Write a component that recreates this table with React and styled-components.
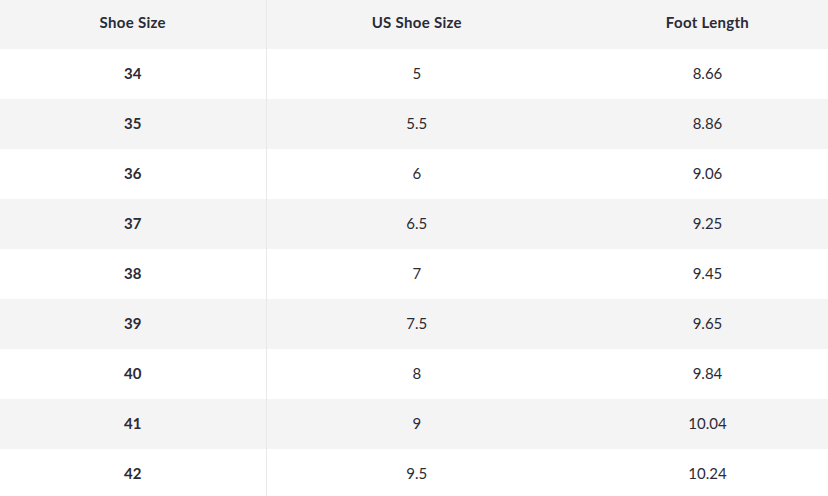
import React from 'react';
import styled, { createGlobalStyle } from 'styled-components';

const GlobalStyle = createGlobalStyle`
  html, body {
    margin: 0;
    padding: 0;
    background: #fff;
  }
  body {
    width: 828px;
    height: 496px;
    overflow: hidden;
  }
`;

const Wrapper = styled.div`
  width: 828px;
  height: 496px;
  overflow: hidden;
  font-family: Lato, 'Liberation Sans', sans-serif;
  color: #2b2b35;
`;

const Table = styled.table`
  width: 848px;
  border-collapse: collapse;
  table-layout: fixed;
`;

const Row = styled.tr`
  height: ${(p) => (p.$head ? 49 : 50)}px;
  background: ${(p) => (p.$shade ? '#f4f4f4' : '#ffffff')};
`;

const Cell = styled.td`
  padding: 0 0 3px;
  text-align: center;
  vertical-align: middle;
  font-size: 15px;
  font-weight: ${(p) => (p.$bold ? 700 : 400)};
  border-right: ${(p) => (p.$divider ? '1px solid #e8e8e8' : 'none')};
`;

const HeadCell = styled.th`
  padding: 0 0 5px;
  text-align: center;
  vertical-align: middle;
  font-size: 15px;
  letter-spacing: 0.3px;
  font-weight: 700;
  border-right: ${(p) => (p.$divider ? '1px solid #e8e8e8' : 'none')};
`;

const sizes = [
  ['34', '5', '8.66'],
  ['35', '5.5', '8.86'],
  ['36', '6', '9.06'],
  ['37', '6.5', '9.25'],
  ['38', '7', '9.45'],
  ['39', '7.5', '9.65'],
  ['40', '8', '9.84'],
  ['41', '9', '10.04'],
  ['42', '9.5', '10.24'],
];

const App = () => (
  <Wrapper>
    <GlobalStyle />
    <Table>
      <colgroup>
        <col style={{ width: 266 }} />
        <col style={{ width: 301 }} />
        <col style={{ width: 281 }} />
      </colgroup>
      <thead>
        <Row $head $shade>
          <HeadCell $divider>Shoe Size</HeadCell>
          <HeadCell>US Shoe Size</HeadCell>
          <HeadCell>Foot Length</HeadCell>
        </Row>
      </thead>
      <tbody>
        {sizes.map(([eu, us, len], i) => (
          <Row key={eu} $shade={i % 2 === 1}>
            <Cell $bold $divider>{eu}</Cell>
            <Cell>{us}</Cell>
            <Cell>{len}</Cell>
          </Row>
        ))}
      </tbody>
    </Table>
  </Wrapper>
);

export default App;
